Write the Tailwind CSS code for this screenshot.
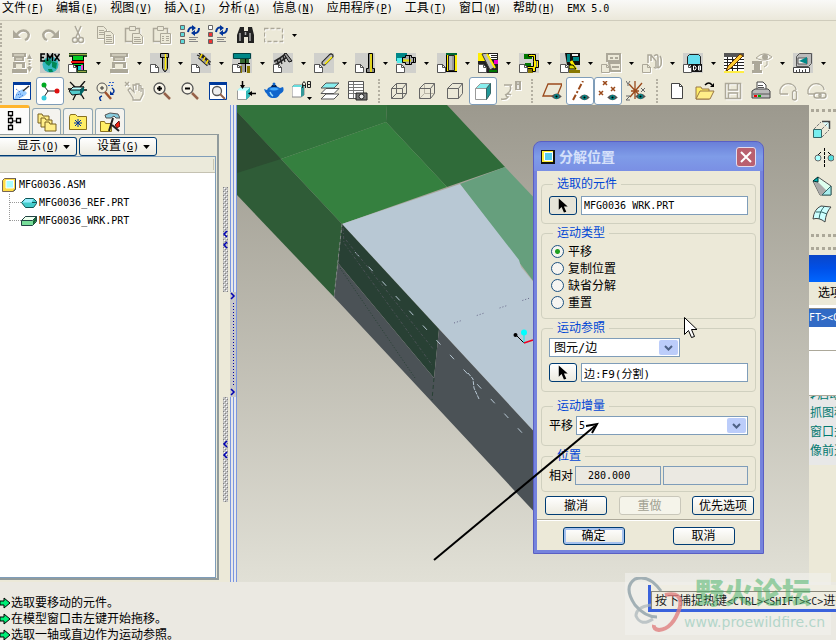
<!DOCTYPE html>
<html lang="zh-CN">
<head>
    <meta charset="UTF-8">
    <meta name="viewport" content="width=device-width, initial-scale=1.0">
    <title>MFG0036 - 分解位置</title>
    <script src="https://cdn.jsdelivr.net/npm/@tailwindcss/browser@4"></script>
</head>
<body class="relative flex h-screen flex-col overflow-hidden bg-[#ece9d8] font-['DejaVu_Sans_Mono','Noto_Sans_CJK_SC',monospace] text-[12px] leading-4 text-black">

    <!-- Icon sprite -->
    <svg class="hidden" aria-hidden="true">
        <symbol id="caret" viewBox="0 0 5 3"><path d="M0 0h5L2.5 3z"/></symbol>
        <symbol id="doc" viewBox="0 0 20 20"><path d="M.5 11.5h5l3 3v5h-8z" fill="#fff" stroke="#555"/><path d="M5.5 11v3.5H9" fill="none" stroke="#555"/></symbol>
        <symbol id="docg" viewBox="0 0 20 20"><path d="M.5 11.5h5l3 3v5h-8z" fill="#ece9d8" stroke="#aca899"/><path d="M5.5 11v3.5H9" fill="none" stroke="#aca899"/></symbol>
        <symbol id="eye" viewBox="0 0 12 8"><path d="M0 4Q6-3 12 4Q6 10 0 4z" fill="#555"/><circle cx="6" cy="4" r="2.8" fill="#088"/><circle cx="6" cy="4" r="1.2"/></symbol>

        <symbol id="undo" viewBox="0 0 20 20"><path d="M4 11Q8 4 14 6Q19 9 15 14l-2 1" fill="none" stroke="#aca899" stroke-width="2.5"/><path d="M1 5v8h8z" fill="#aca899"/></symbol>
        <symbol id="redo" viewBox="0 0 20 20"><path d="M16 11Q12 4 6 6Q1 9 5 14l2 1" fill="none" stroke="#aca899" stroke-width="2.5"/><path d="M19 5v8h-8z" fill="#aca899"/></symbol>
        <symbol id="cut" viewBox="0 0 20 20"><g fill="none" stroke="#aca899" stroke-width="1.5"><path d="M7 1l5 11M13 1L8 12"/><circle cx="7" cy="15" r="2.5"/><circle cx="13" cy="15" r="2.5"/></g></symbol>
        <symbol id="copy" viewBox="0 0 20 20"><g fill="#ece9d8" stroke="#aca899"><path d="M1.500 1.500h6l3 3v9h-9z"/><path d="M3 5.500h5M3 7.500h5M3 9.500h5"/><path d="M8.500 6.500h6l3 3v9h-9z"/><path d="M10 10.500h5M10 12.500h6M10 14.500h6M10 16.500h6"/></g></symbol>
        <symbol id="paste" viewBox="0 0 20 20"><g fill="#ece9d8" stroke="#aca899"><path d="M1.500 3.500h14v13h-14z" stroke-width="1.500"/><path d="M5.500 1.500h6v4h-6z"/><path d="M8.500 8.500h7l3 3v7h-10z"/><path d="M10 12.500h6M10 14.500h7M10 16.500h7"/></g></symbol>
        <symbol id="pastes" viewBox="0 0 20 20"><g fill="#ece9d8" stroke="#aca899"><path d="M1.500 3.500h14v13h-14z" stroke-width="1.500"/><path d="M5.500 1.500h6v4h-6z"/><path d="M8.500 8.500h10v10h-10z"/><path d="M10 11.500h2M14 11.500h3M10 13.500h2M14 13.500h3M10 15.500h2M14 15.500h3"/></g></symbol>
        <symbol id="regen" viewBox="0 0 20 20"><g fill="#5fd8d8" stroke="#666"><path d="M.5.500h4v4h-4zM.5 7.500h4v4h-4zM.5 14.500h4v4h-4z"/></g><path d="M8 7Q9 1 14 3M19 3q0 6-6 5" fill="none" stroke="#003399" stroke-width="2"/><path d="M12 0l4 3-4 3zM15 5l-4 3 4 3z" fill="#039"/><path d="M9 12.500h9M9 14.500h7M9 16.500h9" stroke="#888"/></symbol>
        <symbol id="regen2" viewBox="0 0 20 20"><g stroke="#666"><path d="M.5.500h4v4h-4z" fill="#fff"/><path d="M.5 7.500h4v4h-4zM.5 14.500h4v4h-4z" fill="#e33"/></g><path d="M8 7Q9 1 14 3M19 3q0 6-6 5" fill="none" stroke="#003399" stroke-width="2"/><path d="M12 0l4 3-4 3zM15 5l-4 3 4 3z" fill="#039"/><path d="M9 12.500h9M9 14.500h7M9 16.500h9" stroke="#888"/></symbol>
        <symbol id="find" viewBox="0 0 20 20"><path d="M4 2h4v4h4V2h4l2 8v8h-6v-6H8v6H1v-8z" fill="#222"/><path d="M4 8v8M14 8v8M9.500 7v3" stroke="#aaa" stroke-width="1.500"/></symbol>
        <symbol id="marquee" viewBox="0 0 20 20"><path d="M.5 3.500h18v13H.5z" fill="none" stroke="#aca899" stroke-width="1.300" stroke-dasharray="4 2"/></symbol>

        <symbol id="moldg" viewBox="0 0 20 20"><path d="M1 0h18v4H1zM4 4h12v4H4zM1 16h18v4H1zM3 9h14v6H3z" fill="#aca899"/><path d="M3 2h14M6 6h8" stroke="#ece9d8"/><path d="M6 11h8v5H6z" fill="#ece9d8"/></symbol>
        <symbol id="moldarrow" viewBox="0 0 20 20"><path d="M0 0h14v4H0zM2 4h10v4H2zM0 16h15v4H0zM1 9h12v6H1z" fill="#aca899"/><path d="M2 2h10M4 6h6" stroke="#ece9d8"/><path d="M4 11h6v5H4z" fill="#ece9d8"/><path d="M17.500 4v12" stroke="#aca899" stroke-width="2" stroke-dasharray="2 1"/><path d="M15 6l2.500-5L20 6zM15 14l2.500 5L20 14z" fill="#aca899"/></symbol>
        <symbol id="emx" viewBox="0 0 20 20"><path d="M0 0h20v20H0z" fill="#c8ccc8"/><circle cx="10.500" cy="11.500" r="8" fill="#38b8c0"/><path d="M4 7l6-1 2 3-3 4-3-2zM12 8l5 2-1 6-4-2zM8 16l4 0 1 3H9z" fill="#085"/><g stroke="#000" stroke-width="1.500" fill="none"><path d="M5 1H1v7h4M1 4.500h3M7.500 8V1l2.500 4L12.500 1v7M14.500 1l5 7M19.500 1l-5 7"/></g></symbol>
        <symbol id="mold" viewBox="0 0 20 20"><path d="M1 0h18v4H1zM4 17h15v3H4z" fill="#242"/><path d="M4 3h12v14H4z" fill="#000"/><path d="M5 3h10v4H5z" fill="#0c2"/><path d="M3 8h13v2H3z" fill="#e11"/><path d="M5 11h10v1H5z" fill="#0c2"/><path d="M10 13h3v4h-3z" fill="#0cc"/><path d="M13 12h2v5h-2z" fill="#e4c"/><path d="M1 1.500h18M10 18.500h8" stroke="#9a4"/><use href="#doc"/></symbol>
        <symbol id="screw" viewBox="0 0 20 20"><path d="M0 0h20v20H0z" fill="#d0d0cc"/><path d="M10.500.500h8v4h-8zM12.500 4.500h5v11l-2 3h-1l-2-3z" fill="#999" stroke="#000"/><path d="M15.500 1v16" stroke="#fe0" stroke-width="1.500"/><use href="#doc"/></symbol>
        <symbol id="spring" viewBox="0 0 20 20"><path d="M0 0h20v20H0z" fill="#d0d0cc"/><path d="M9 3l9 8" stroke="#222" stroke-width="6"/><path d="M9 3l9 8" stroke="#999" stroke-width="4"/><path d="M6 2l7 3M8 0l7 7M12 2l5 7M15 5l4 7" stroke="#222" stroke-width="1.300"/><path d="M9 5l2-4M12 8l2-4M15 11l2-4" stroke="#fd0" stroke-width="1.500"/><use href="#doc"/></symbol>
        <symbol id="plate" viewBox="0 0 20 20"><path d="M0 0h20v20H0z" fill="#d0d0cc"/><path d="M1.500.500h17v5h-17z" fill="#088" stroke="#044"/><path d="M8 6h9v4H8z" fill="#363"/><path d="M9 10h5v9H9z" fill="#999"/><path d="M6 10.500h12M13.500 6v13" stroke="#000"/><path d="M8 13h2v7H8zM15 13h3v7h-3z" fill="#870"/><use href="#doc"/></symbol>
        <symbol id="bolt" viewBox="0 0 20 20"><path d="M0 0h20v20H0z" fill="#d0d0cc"/><path d="M2 10l5-3 7-5" stroke="#222" stroke-width="5"/><path d="M2 10l5-3 7-5" stroke="#999" stroke-width="2"/><path d="M4 7l2 5M7 5l2 6M10 3l2 6" stroke="#222" stroke-width="1.300"/><path d="M11 1l2-1 6 8-3 1z" fill="#999" stroke="#111"/><use href="#doc"/></symbol>
        <symbol id="pin" viewBox="0 0 20 20"><path d="M0 0h20v20H0z" fill="#d0d0cc"/><path d="M10 10l7-7" stroke="#222" stroke-width="5" stroke-linecap="round"/><path d="M10 10l7-7" stroke="#bbb" stroke-width="3" stroke-linecap="round"/><path d="M11 11l7-7" stroke="#fe0" stroke-width="1.500"/><use href="#doc"/></symbol>
        <symbol id="sleeve" viewBox="0 0 20 20"><path d="M0 0h20v20H0z" fill="#d0d0cc"/><path d="M13.500.500h4v15h2v4h-8v-4h2z" fill="#888" stroke="#000"/><path d="M16 1v18" stroke="#fe0" stroke-width="1.500"/><use href="#doc"/></symbol>
        <symbol id="nozzle" viewBox="0 0 20 20"><path d="M0 0h20v20H0z" fill="#d0d0cc"/><path d="M0 0h11v8H0z" fill="#088"/><path d="M1 5h6v5H1z" fill="#5ee"/><path d="M6.500 4.500h3v-2h6v2h4v5h-4v2h-6v-2h-3z" fill="#aaa" stroke="#000"/><path d="M7 7.500h8" stroke="#dd0" stroke-width="2"/><path d="M13.500 3v8M17.500 5v4" stroke="#000"/><use href="#doc"/></symbol>
        <symbol id="tube" viewBox="0 0 20 20"><path d="M0 0h20v20H0z" fill="#d0d0cc"/><path d="M9 1h11v17H9z" fill="#fe0"/><path d="M9 0h11v2H9z" fill="#063"/><path d="M11.500 2.500h6v15h-6z" fill="#bbb" stroke="#222"/><path d="M16 3v14" stroke="#777"/><path d="M9 18.500h11M9.500 2v16" stroke="#000"/><use href="#doc"/></symbol>
        <symbol id="slider" viewBox="0 0 20 20"><path d="M0 0h20v20H0z" fill="#222"/><path d="M0 0h7v8H0z" fill="#fe0"/><path d="M11 1h8v5h-8z" fill="#fff"/><path d="M13 2.500h7M13 4.500h7" stroke="#222"/><path d="M16 7h4v4h-4z" fill="#e0c"/><path d="M4 1l5-1 8 14-5 3z" fill="#bbb" stroke="#333"/><path d="M9 1l8 14" stroke="#fe0" stroke-width="2"/><path d="M11 17h8v2h-8z" fill="#070"/><use href="#doc"/></symbol>
        <symbol id="clamp" viewBox="0 0 20 20"><path d="M0 0h20v20H0z" fill="#d0d0cc"/><path d="M5 1h8v5H5zM6 10h6v5H6z" fill="#070"/><path d="M9 16h5v4H9z" fill="#870"/><path d="M12.500 1.500h4v6h3v7h-3v4h-3v-3h-5v-2h6v-5h0v-5h-5v-2z" fill="#fe0" stroke="#000"/><path d="M17.500 8v6" stroke="#777"/><use href="#doc"/></symbol>
        <symbol id="lifter" viewBox="0 0 20 20"><path d="M0 0h20v20H0z" fill="#d0d0cc"/><path d="M5 0h15v12H7z" fill="#111"/><path d="M7 1h3v8H7zM13 4h6v4h-6z" fill="#088"/><path d="M12 1h6v2h-6z" fill="#eee"/><path d="M11 8l5 9" stroke="#fe0" stroke-width="3"/><path d="M9 12h4l3 4H9z" fill="#dd0" stroke="#000"/><path d="M9 17h11v3H9z" fill="#870"/><use href="#doc"/></symbol>
        <symbol id="blockg" viewBox="0 0 20 20"><path d="M6 1h13v7H6zM8 10h12v8H10z" fill="#ece9d8" stroke="#aca899" stroke-width="2"/><path d="M9 4h3v2H9zM14 4h3v2h-3zM11 13h7v2h-7z" fill="#aca899"/><use href="#docg"/></symbol>
        <symbol id="pairg" viewBox="0 0 20 20"><path d="M6 10V2h3v6M9 2l5 6v6M12 3q4-3 4 1v10q-3 2-4 0M18 3q2 3 1 9q-2 4-4 2" fill="none" stroke="#aca899" stroke-width="1.500"/><use href="#docg"/></symbol>
        <symbol id="db" viewBox="0 0 20 20"><path d="M0 0h20v20H0z" fill="#d0d0cc"/><path d="M4.500 3.500l2-2h9l2 2v8h-13z" fill="#6de" stroke="#222"/><path d="M8 11h11v8H8z" fill="#111"/><path d="M10.500 13v4h1.500l1-1v-2l-1-1zM15.500 13v4h2v-4zM15 15h3" fill="none" stroke="#fff"/><use href="#doc"/></symbol>
        <symbol id="bom" viewBox="0 0 20 20"><path d="M0 0h20v19H0z" fill="#fff"/><path d="M0 0h20v4H0z" fill="#555"/><path d="M0 6.500h20M0 9.500h20M0 12.500h20M0 15.500h20M3.500 4v15M8.500 4v15M13.500 4v15" stroke="#222"/><path d="M2 18l2-5L16 1l3 2L7 15z" fill="#fc3" stroke="#630"/><path d="M0 19h20" stroke="#fe4" stroke-width="2"/></symbol>
        <symbol id="viewg" viewBox="0 0 20 20"><path d="M0 8h10v3H8v6h2v3H0v-3h2v-6H0z" fill="#aca899"/><path d="M4 5Q12-3 20 4Q14 9 6 6z" fill="none" stroke="#aca899"/><circle cx="13" cy="4" r="3" fill="#aca899"/><path d="M15 8v4l-3 2" fill="none" stroke="#aca899"/></symbol>
        <symbol id="measure" viewBox="0 0 20 20"><path d="M0 0h20v20H0z" fill="#d0d0cc"/><path d="M3.500 3.500l3-3h12v10l-3 3h-12z" fill="#bbb" stroke="#555"/><path d="M5 5h9v6H5z" fill="#eee" stroke="#555"/><path d="M6 8l8-4v7z" fill="#088"/><path d="M.5 14.500h16v5H.5z" fill="#fff" stroke="#444"/><path d="M3.500 17v2M6.500 16v3M9.500 17v2M12.500 16v3" stroke="#444"/></symbol>

        <symbol id="repaint" viewBox="0 0 20 20"><path d="M1.500 1.500h17v17h-17z" fill="#fff" stroke="#003a9c"/><path d="M1 1h18v3H1z" fill="#003a9c"/><path d="M5 11l6-3 4 4q-2 4-10 6H2z" fill="#9cf"/><path d="M11 10l6-5" stroke="#333" stroke-width="1.500"/><path d="M4 8l4 3M4 14l5-1M7 17l4-3" stroke="#36c" stroke-dasharray="1 1"/></symbol>
        <symbol id="spin" viewBox="0 0 20 20"><path d="M4 5l4 5-4 6M8 10h8" fill="none" stroke="#222"/><circle cx="4" cy="4" r="2.500" fill="#0a2"/><circle cx="4" cy="17" r="2.500" fill="#3cd"/><circle cx="17" cy="10" r="2.500" fill="#d11"/></symbol>
        <symbol id="orient" viewBox="0 0 20 20"><path d="M2 1l5 5M17 0l-5 6M0 8h3M15 9h4M8 13l-3 6M13 13l3 5" stroke="#111" stroke-width="1.300"/><path d="M1 10l4-4h11l-3 7-9 1z" fill="#5cc" stroke="#111"/><path d="M2 9l3-3h11l-4 3z" fill="#bff" stroke="#111"/><path d="M12 9l4-3v4l-4 5z" fill="#066"/></symbol>
        <symbol id="spincenter" viewBox="0 0 20 20"><circle cx="6" cy="7" r="5" fill="#f4f0dc" stroke="#555"/><path d="M9 11l6 7" stroke="#a0522d" stroke-width="2.500"/><path d="M6 5v4M4 7h4" stroke="#333"/><path d="M13 1.500h5M12 4.500h5" stroke="#36c" stroke-dasharray="2 1"/><path d="M16 7q4 3 0 6M6 15q-4 1-1 5" fill="none" stroke="#039" stroke-width="1.500"/><path d="M14 10l4 4h-4z" fill="#039"/></symbol>
        <symbol id="hand" viewBox="0 0 20 20"><path d="M1 1l4 4M5 1L1 5M4 9l5 8v2h7l3-6V8l-2-1v4-6l-2-1v6-7l-3 0v6-5H9l1 7-4-4z" fill="none" stroke="#aca899" stroke-width="1.300"/></symbol>
        <symbol id="zoomin" viewBox="0 0 20 20"><circle cx="7.500" cy="7.500" r="5.500" fill="#f8f4e8" stroke="#555" stroke-width="1.300"/><path d="M12 12l6 6" stroke="#96624a" stroke-width="2.500"/><path d="M5 7.500h5M7.500 5v5" stroke="#000" stroke-width="2"/></symbol>
        <symbol id="zoomout" viewBox="0 0 20 20"><circle cx="7.500" cy="7.500" r="5.500" fill="#f8f4e8" stroke="#555" stroke-width="1.300"/><path d="M12 12l6 6" stroke="#96624a" stroke-width="2.500"/><path d="M5 7.500h5" stroke="#000" stroke-width="2"/></symbol>
        <symbol id="refit" viewBox="0 0 20 20"><path d="M1.500 1.500h17v17h-17z" fill="#fff" stroke="#003a9c"/><path d="M1 1h18v3H1z" fill="#003a9c"/><circle cx="9" cy="10" r="4.500" fill="#eee" stroke="#555" stroke-width="1.300"/><path d="M12 13l5 5" stroke="#96624a" stroke-width="2"/></symbol>
        <symbol id="reorient" viewBox="0 0 20 20"><path d="M1.500 9.500l3-3h9v9l-3 3h-9z" fill="#fff" stroke="#999"/><path d="M10 10l4-4v9l-4 4z" fill="#3bb"/><path d="M1 9.500l3-3h10l-3 3z" fill="#bff"/><path d="M6.500 0v6M20 12.500h-5" stroke="#000" stroke-width="1.500"/><path d="M4 4h5L6.500 8zM16 10v5l-4-2.500z"/></symbol>
        <symbol id="teapot" viewBox="0 0 20 20"><path d="M4 7Q10 3 16 7l3-1q2 5-3 7-2 4-5 4H8q-4-1-5-4-2-1-3-5l3 1z" fill="#16c"/><path d="M8 4h4l1 2H7z" fill="#025"/><path d="M5 8q5-3 10 0-5 3-10 0z" fill="#4af"/><path d="M6 11q1 3 3 4" stroke="#9df" fill="none" stroke-width="1.500"/><circle cx="10" cy="3" r="1.500" fill="#16c"/></symbol>
        <symbol id="saved" viewBox="0 0 20 20"><path d="M0 6l2-2h10v10l-3 2H0z" fill="#fff" stroke="#888"/><path d="M0 6l2-2h10L9 6z" fill="#6dd"/><path d="M9 6l3-2v10l-3 2z" fill="#399"/><path d="M10.500 7V2.500l1.500-2 1.500 2V7M10.500 4.500h3M15.500.500v6h3v-6zM15.500 3.500h3" fill="none" stroke="#222"/><path d="M15 16h5l-2.500 3z"/></symbol>
        <symbol id="layers" viewBox="0 0 20 20"><g stroke="#555"><path d="M1 18l5-5h13l-5 5z" fill="#fff"/><path d="M1 12.500l5-5h13l-5 5z" fill="#fff"/><path d="M1 7l5-5h13l-5 5z" fill="#8ee"/></g></symbol>
        <symbol id="viewmgr" viewBox="0 0 20 20"><path d="M.5.500h15v17H.5z" fill="#fff" stroke="#555"/><path d="M1 3.500h14M1 6.500h14M1 9.500h14M1 12.500h8M5.500 1v16" stroke="#777"/><path d="M8 12h11v7H8z" fill="#777" stroke="#222"/><circle cx="13.500" cy="15.500" r="2.500" fill="#eee" stroke="#222"/></symbol>
        <symbol id="wire" viewBox="0 0 20 20"><path d="M2.500 7.500h11v10h-11zM7.500 2.500h10v10h-10zM2.500 7.500l5-5M13.500 7.500l4-5M13.500 17.500l4-5M2.500 17.500l5-5" fill="none" stroke="#666"/></symbol>
        <symbol id="hidline" viewBox="0 0 20 20"><path d="M7.500 2.500v10h10M2.500 17.500l5-5" fill="none" stroke="#b8b4a6"/><path d="M2.500 7.500h11v10h-11zM2.500 7.500l5-5h10v10l-4 5M13.500 7.500l4-5" fill="none" stroke="#666"/></symbol>
        <symbol id="nohid" viewBox="0 0 20 20"><path d="M2.500 7.500h11v10h-11zM2.500 7.500l5-5h10v10l-4 5M13.500 7.500l4-5" fill="none" stroke="#666"/></symbol>
        <symbol id="shade" viewBox="0 0 20 20"><path d="M2.500 7.500h11v11h-11z" fill="#fff" stroke="#999"/><path d="M2.500 7.500l5-5h10l-4 5z" fill="#8ee" stroke="#999"/><path d="M13.500 7.500l4-5v10l-4 6z" fill="#299" stroke="#366"/></symbol>
        <symbol id="note" viewBox="0 0 20 20"><path d="M3 4h8M9 5q2 4-2 7t0 4q-2 3-7 2M4 14q3-2 6 0" fill="none" stroke="#aca899" stroke-width="1.500"/><path d="M14 0h6v9h-6z" fill="#aca899"/><path d="M17 1.500v1M17 4v4" stroke="#fff" stroke-width="1.500"/></symbol>
        <symbol id="planes" viewBox="0 0 20 20"><path d="M1 15L6 3h14l-5 12z" fill="none" stroke="#9a4a1c" stroke-width="1.300"/><use href="#eye" x="9" y="12" width="11" height="7"/></symbol>
        <symbol id="axes" viewBox="0 0 20 20"><path d="M3 19L13 0" stroke="#9a4a1c" stroke-width="2" stroke-dasharray="6 2 2 2"/><use href="#eye" x="9" y="13" width="11" height="7"/></symbol>
        <symbol id="points" viewBox="0 0 20 20"><path d="M5 0l4 4M9 0L5 4M13 6l4 4M17 6l-4 4M1 10l4 4M5 10l-4 4" stroke="#9a4a1c" stroke-width="1.500"/><use href="#eye" x="9" y="13" width="11" height="7"/></symbol>
        <symbol id="csys" viewBox="0 0 20 20"><path d="M9 0v18M3 3l12 13M16 2L4 16M5 10h8" stroke="#9a4a1c" stroke-width="1.300"/><path d="M0 0l2 3 2-3M2 3v2M15 7l4 4M19 7l-4 4M0 15h4l-4 4h4" fill="none" stroke="#666"/><use href="#eye" x="9" y="12" width="11" height="7"/></symbol>
        <symbol id="new" viewBox="0 0 20 20"><path d="M4.500 2.500h8l3 3v12h-11z" fill="#fff" stroke="#444"/><path d="M12.500 2.500v3h3" fill="none" stroke="#444"/></symbol>
        <symbol id="open" viewBox="0 0 20 20"><path d="M1 6h5l1 2h7v10H1z" fill="#fe6" stroke="#974"/><path d="M1 18l4-8h14l-4 8z" fill="#fe8" stroke="#974"/><path d="M10 4q4-4 7 0" fill="none" stroke="#000" stroke-width="1.500"/><path d="M19 2v4h-4z"/></symbol>
        <symbol id="save" viewBox="0 0 20 20"><path d="M2.500 2.500h15v15h-15z" fill="none" stroke="#aca899" stroke-width="1.500"/><path d="M5.500 3v6h9V3M5.500 17v-5h9v5" fill="none" stroke="#aca899" stroke-width="1.500"/></symbol>
        <symbol id="print" viewBox="0 0 20 20"><path d="M6 9V1h6l3 3v5" fill="#fff" stroke="#444"/><path d="M7 4.500h5M7 6.500h6" stroke="#555"/><path d="M1 10l3-2h13l2 2v7H1z" fill="#bbb" stroke="#444"/><path d="M2 13h17" stroke="#555"/><path d="M3 14h3v2H3z" fill="#e00"/><path d="M7 14h3v2H7z" fill="#0a0"/></symbol>
        <symbol id="clip" viewBox="0 0 20 20"><path d="M1 13V9Q4 1 12 3q5 2 5 6M1 13h8" fill="none" stroke="#aca899" stroke-width="1.300"/><path d="M13.500 18v-7q2-3 4 0v7q-2 2-4 0v-4" fill="none" stroke="#aca899" stroke-width="1.300"/></symbol>
        <symbol id="link" viewBox="0 0 20 20"><path d="M1 13V9Q4 1 12 3q5 2 5 6M1 13h6" fill="none" stroke="#aca899" stroke-width="1.300"/><rect x="7" y="12" width="7" height="5" rx="2.500" fill="none" stroke="#aca899" stroke-width="1.500"/><rect x="12" y="12" width="7" height="5" rx="2.500" fill="none" stroke="#aca899" stroke-width="1.500"/></symbol>

        <symbol id="treetab" viewBox="0 0 20 20"><path d="M6 3v14M6 10h8" fill="none" stroke="#000"/><path d="M3.500.500h4v4h-4zM3.500 7.500h4v4h-4zM3.500 14.500h4v4h-4zM11.500 7.500h4v4h-4z" fill="#fff" stroke="#000" stroke-width="1.300"/></symbol>
        <symbol id="folders" viewBox="0 0 20 20"><g fill="#fe8" stroke="#786020"><path d="M1 2h4l1 2h6v7H1z"/><path d="M4 6h4l1 2h6v7H4z"/><path d="M8 10h4l1 2h6v7H8z"/></g></symbol>
        <symbol id="favorite" viewBox="0 0 20 20"><path d="M1.500 4.500l1-2h5l2 2h9v13h-17z" fill="#fe6" stroke="#887020"/><path d="M10 7v8M6 11h8M7 8l6 6M13 8l-6 6" stroke="#0033a0"/></symbol>
        <symbol id="connect" viewBox="0 0 20 20"><path d="M.5 9.500h4l1 2h6v8H.5z" fill="#fe6" stroke="#887020"/><path d="M5 3l5-2 8 1 2 4h-4l-2-2-3 2H6z" fill="#8cd" stroke="#555"/><path d="M13 6L9 19M12 13l7 6" stroke="#222" stroke-width="2"/><path d="M15 13l4-4 1 5-3 2z" fill="#e21" stroke="#611"/></symbol>
        <symbol id="asm" viewBox="0 0 14 14"><path d="M.5 2.500l2-2h11v11l-2 2H.5z" fill="#fd4" stroke="#765"/><path d="M4 2.500h7.500V10H4z" fill="#aff" stroke="#fff"/><path d="M11.500 13l2-2V.500" fill="none" stroke="#345"/></symbol>
        <symbol id="explode" viewBox="0 0 14 14"><path d="M0 0h14v14H0z" fill="#111"/><path d="M1 1h11v11H1z" fill="#fe3"/><path d="M3.500 2.500h8v8h-8z" fill="#5ce" stroke="#fff"/></symbol>
        <symbol id="ref" viewBox="0 0 16 12"><path d="M.5 5.500l4-4h8l3 3v2l-3 4h-8z" fill="#4cc" stroke="#155"/><path d="M1.500 5.500l3-3.500h8l-2 3.500z" fill="#9ef"/><path d="M11 5.500h4" stroke="#155"/></symbol>
        <symbol id="wrk" viewBox="0 0 16 12"><path d="M.5 5.500l4-4h11v5l-4 4H.5z" fill="#7d9" stroke="#244"/><path d="M.5 5.500l4-4h11l-4 4z" fill="#efe" stroke="#244"/><path d="M12 6l3-4v4l-3 4z" fill="#163"/></symbol>
        <symbol id="pointer" viewBox="0 0 12 17"><path d="M1.500.500v12l3-3 2.500 6 2.500-1-2.500-5.500h4z"/></symbol>
        <symbol id="chevron" viewBox="0 0 9 6"><path d="M1 1l3.500 3.500L8 1" fill="none" stroke="#4d6185" stroke-width="2"/></symbol>
        <symbol id="goarrow" viewBox="0 0 11 12"><path d="M0 4h4V1l6 5-6 5V8H0z" fill="#0e7" stroke="#000"/></symbol>

        <symbol id="extrude" viewBox="0 0 20 20"><path d="M1.500 9.500h8v8h-8z" fill="#7ee" stroke="#366"/><path d="M10 1.500h7.500V9" fill="#dff" stroke="#444" stroke-width="1.500"/><path d="M2 9l7-7M10 9l7-7M10 17l7-7" stroke="#777" stroke-dasharray="3 1"/></symbol>
        <symbol id="mirror" viewBox="0 0 20 20"><path d="M10.500 0v20" stroke="#000" stroke-dasharray="3 1"/><path d="M4 7l3-3M17 7l-3-3" stroke="#000"/><circle cx="4" cy="10" r="3" fill="#aff" stroke="#666"/><circle cx="17" cy="10" r="3" fill="#5dd" stroke="#666"/></symbol>
        <symbol id="draft" viewBox="0 0 20 20"><path d="M1 5l5-4 13 9v9H8z" fill="#dfe" stroke="#555"/><path d="M6 6l13 13H8L2 6z" fill="#aaa"/><path d="M10 19l9-9v9z" fill="#aee" stroke="#366"/><path d="M1 5l5-4v5z" fill="#0bb" stroke="#033"/></symbol>
        <symbol id="surface" viewBox="0 0 20 20"><path d="M1 15Q2 5 9 2l10 1q-5 5-6 15-6-5-12-3z" fill="#cff" stroke="#444"/><path d="M4 8q6-1 11 2M13 2Q8 6 7 15" fill="none" stroke="#366"/></symbol>
    </svg>

    <header>
        <nav class="flex h-[21px] gap-3 border-b border-[#cfccbc] bg-gradient-to-b from-[#f9f9f7] to-[#ebe8da] pl-0.5 leading-[17px] whitespace-nowrap">
            <a href="#">文件<span class="text-[10px]">(<u>F</u>)</span></a>
            <a href="#">编辑<span class="text-[10px]">(<u>E</u>)</span></a>
            <a href="#">视图<span class="text-[10px]">(<u>V</u>)</span></a>
            <a href="#">插入<span class="text-[10px]">(<u>I</u>)</span></a>
            <a href="#">分析<span class="text-[10px]">(<u>A</u>)</span></a>
            <a href="#">信息<span class="text-[10px]">(<u>N</u>)</span></a>
            <a href="#">应用程序<span class="text-[10px]">(<u>P</u>)</span></a>
            <a href="#">工具<span class="text-[10px]">(<u>T</u>)</span></a>
            <a href="#">窗口<span class="text-[10px]">(<u>W</u>)</span></a>
            <a href="#">帮助<span class="text-[10px]">(<u>H</u>)</span></a>
            <a href="#"><span class="text-[10px]">EMX 5.0</span></a>
        </nav>

        <div role="toolbar" aria-label="编辑" class="flex h-7 items-center">
            <span class="mr-1.5 h-6 w-0.5 border-l-2 border-dotted border-[#b4b0a2]"></span>
            <button aria-label="撤消" class="flex w-7 justify-center"><svg class="size-5 drop-shadow-[1px_1px_0_#fff]"><use href="#undo"/></svg></button>
            <button aria-label="重做" class="flex w-7 justify-center"><svg class="size-5 drop-shadow-[1px_1px_0_#fff]"><use href="#redo"/></svg></button>
            <button aria-label="剪切" class="flex w-7 justify-center"><svg class="size-5 drop-shadow-[1px_1px_0_#fff]"><use href="#cut"/></svg></button>
            <button aria-label="复制" class="flex w-7 justify-center"><svg class="size-5 drop-shadow-[1px_1px_0_#fff]"><use href="#copy"/></svg></button>
            <button aria-label="粘贴" class="flex w-7 justify-center"><svg class="size-5 drop-shadow-[1px_1px_0_#fff]"><use href="#paste"/></svg></button>
            <button aria-label="选择性粘贴" class="flex w-7 justify-center"><svg class="size-5 drop-shadow-[1px_1px_0_#fff]"><use href="#pastes"/></svg></button>
            <button aria-label="再生" class="flex w-7 justify-center"><svg class="size-5"><use href="#regen"/></svg></button>
            <button aria-label="再生管理器" class="flex w-7 justify-center"><svg class="size-5"><use href="#regen2"/></svg></button>
            <button aria-label="查找" class="flex w-7 justify-center"><svg class="size-5"><use href="#find"/></svg></button>
            <button aria-label="选取框" class="flex w-7 justify-center"><svg class="size-5 drop-shadow-[1px_1px_0_#fff]"><use href="#marquee"/></svg></button>
            <button aria-label="更多选取" class="flex w-3 justify-center"><svg class="h-[3px] w-[5px]"><use href="#caret"/></svg></button>
        </div>

        <div role="toolbar" aria-label="EMX" class="flex h-7 items-center">
            <span class="mr-1.5 h-6 w-0.5 border-l-2 border-dotted border-[#b4b0a2]"></span>
            <button aria-label="模架" class="flex w-7 justify-center"><svg class="size-5 drop-shadow-[1px_1px_0_#fff]"><use href="#moldarrow"/></svg></button>
            <button aria-label="EMX" class="flex w-7 justify-center"><svg class="size-5"><use href="#emx"/></svg></button>
            <button aria-label="组件" class="flex w-7 justify-center"><svg class="size-5"><use href="#mold"/></svg></button>
            <button aria-label="组件菜单" class="flex w-[13px] justify-center"><svg class="h-[3px] w-[5px]"><use href="#caret"/></svg></button>
            <button aria-label="模板" class="flex w-7 justify-center"><svg class="size-5 drop-shadow-[1px_1px_0_#fff]"><use href="#moldg"/></svg></button>
            <button aria-label="模板菜单" class="flex w-[13px] justify-center"><svg class="h-[3px] w-[5px]"><use href="#caret"/></svg></button>
            <button aria-label="螺钉" class="flex w-7 justify-center"><svg class="size-5"><use href="#screw"/></svg></button>
            <button aria-label="螺钉菜单" class="flex w-[13px] justify-center"><svg class="h-[3px] w-[5px]"><use href="#caret"/></svg></button>
            <button aria-label="弹簧" class="flex w-7 justify-center"><svg class="size-5"><use href="#spring"/></svg></button>
            <button aria-label="弹簧菜单" class="flex w-[13px] justify-center"><svg class="h-[3px] w-[5px]"><use href="#caret"/></svg></button>
            <button aria-label="定位环" class="flex w-7 justify-center"><svg class="size-5"><use href="#plate"/></svg></button>
            <button aria-label="定位环菜单" class="flex w-[13px] justify-center"><svg class="h-[3px] w-[5px]"><use href="#caret"/></svg></button>
            <button aria-label="螺栓" class="flex w-7 justify-center"><svg class="size-5"><use href="#bolt"/></svg></button>
            <button aria-label="螺栓菜单" class="flex w-[13px] justify-center"><svg class="h-[3px] w-[5px]"><use href="#caret"/></svg></button>
            <button aria-label="销钉" class="flex w-7 justify-center"><svg class="size-5"><use href="#pin"/></svg></button>
            <button aria-label="销钉菜单" class="flex w-[13px] justify-center"><svg class="h-[3px] w-[5px]"><use href="#caret"/></svg></button>
            <button aria-label="顶杆" class="flex w-7 justify-center"><svg class="size-5"><use href="#sleeve"/></svg></button>
            <button aria-label="顶杆菜单" class="flex w-[13px] justify-center"><svg class="h-[3px] w-[5px]"><use href="#caret"/></svg></button>
            <button aria-label="冷却" class="flex w-7 justify-center"><svg class="size-5"><use href="#nozzle"/></svg></button>
            <button aria-label="冷却菜单" class="flex w-[13px] justify-center"><svg class="h-[3px] w-[5px]"><use href="#caret"/></svg></button>
            <button aria-label="导柱" class="flex w-7 justify-center"><svg class="size-5"><use href="#tube"/></svg></button>
            <button aria-label="导柱菜单" class="flex w-[13px] justify-center"><svg class="h-[3px] w-[5px]"><use href="#caret"/></svg></button>
            <button aria-label="滑块" class="flex w-7 justify-center"><svg class="size-5"><use href="#slider"/></svg></button>
            <button aria-label="滑块菜单" class="flex w-[13px] justify-center"><svg class="h-[3px] w-[5px]"><use href="#caret"/></svg></button>
            <button aria-label="锁模" class="flex w-7 justify-center"><svg class="size-5"><use href="#clamp"/></svg></button>
            <button aria-label="锁模菜单" class="flex w-[13px] justify-center"><svg class="h-[3px] w-[5px]"><use href="#caret"/></svg></button>
            <button aria-label="斜顶" class="flex w-7 justify-center"><svg class="size-5"><use href="#lifter"/></svg></button>
            <button aria-label="斜顶菜单" class="flex w-[13px] justify-center"><svg class="h-[3px] w-[5px]"><use href="#caret"/></svg></button>
            <button aria-label="热流道" class="flex w-7 justify-center"><svg class="size-5 drop-shadow-[1px_1px_0_#fff]"><use href="#blockg"/></svg></button>
            <button aria-label="热流道菜单" class="flex w-[13px] justify-center"><svg class="h-[3px] w-[5px]"><use href="#caret"/></svg></button>
            <button aria-label="元件" class="flex w-7 justify-center"><svg class="size-5 drop-shadow-[1px_1px_0_#fff]"><use href="#pairg"/></svg></button>
            <button aria-label="元件菜单" class="flex w-[13px] justify-center"><svg class="h-[3px] w-[5px]"><use href="#caret"/></svg></button>
            <button aria-label="元件库" class="flex w-7 justify-center"><svg class="size-5"><use href="#db"/></svg></button>
            <button aria-label="元件库菜单" class="flex w-[13px] justify-center"><svg class="h-[3px] w-[5px]"><use href="#caret"/></svg></button>
            <button aria-label="材料清单" class="flex w-7 justify-center"><svg class="size-5"><use href="#bom"/></svg></button>
            <button aria-label="显示" class="flex w-7 justify-center"><svg class="size-5 drop-shadow-[1px_1px_0_#fff]"><use href="#viewg"/></svg></button>
            <button aria-label="显示菜单" class="flex w-[13px] justify-center"><svg class="h-[3px] w-[5px]"><use href="#caret"/></svg></button>
            <button aria-label="测量" class="flex w-7 justify-center"><svg class="size-5"><use href="#measure"/></svg></button>
            <button aria-label="测量菜单" class="flex w-[13px] justify-center"><svg class="h-[3px] w-[5px]"><use href="#caret"/></svg></button>
        </div>

        <div role="toolbar" aria-label="视图" class="flex h-7 items-center">
            <span class="mr-1.5 h-6 w-0.5 border-l-2 border-dotted border-[#b4b0a2]"></span>
            <button aria-label="重画" class="flex w-7 justify-center"><svg class="size-5"><use href="#repaint"/></svg></button>
            <button aria-label="旋转中心" aria-pressed="true" class="flex size-7 items-center justify-center rounded-[3px] border border-[#7f9db9] bg-white"><svg class="size-5"><use href="#spin"/></svg></button>
            <button aria-label="定向模式" class="flex w-7 justify-center"><svg class="size-5"><use href="#orient"/></svg></button>
            <button aria-label="外观库" class="flex w-7 justify-center"><svg class="size-5"><use href="#spincenter"/></svg></button>
            <button aria-label="平移" class="flex w-7 justify-center"><svg class="size-5 drop-shadow-[1px_1px_0_#fff]"><use href="#hand"/></svg></button>
            <button aria-label="放大" class="flex w-7 justify-center"><svg class="size-5"><use href="#zoomin"/></svg></button>
            <button aria-label="缩小" class="flex w-7 justify-center"><svg class="size-5"><use href="#zoomout"/></svg></button>
            <button aria-label="重新调整" class="flex w-7 justify-center"><svg class="size-5"><use href="#refit"/></svg></button>
            <button aria-label="重定向" class="flex w-7 justify-center"><svg class="size-5"><use href="#reorient"/></svg></button>
            <button aria-label="渲染" class="flex w-7 justify-center"><svg class="size-5"><use href="#teapot"/></svg></button>
            <button aria-label="已命名视图" class="flex w-7 justify-center"><svg class="size-5"><use href="#saved"/></svg></button>
            <button aria-label="层" class="flex w-7 justify-center"><svg class="size-5"><use href="#layers"/></svg></button>
            <button aria-label="视图管理器" class="flex w-7 justify-center"><svg class="size-5"><use href="#viewmgr"/></svg></button>
            <span class="flex w-[13px] justify-center"><span class="h-6 border-l-2 border-dotted border-[#b4b0a2]"></span></span>
            <button aria-label="线框" class="flex w-7 justify-center"><svg class="size-5"><use href="#wire"/></svg></button>
            <button aria-label="隐藏线" class="flex w-7 justify-center"><svg class="size-5"><use href="#hidline"/></svg></button>
            <button aria-label="无隐藏线" class="flex w-7 justify-center"><svg class="size-5"><use href="#nohid"/></svg></button>
            <button aria-label="着色" aria-pressed="true" class="flex size-7 items-center justify-center rounded-[3px] border border-[#7f9db9] bg-white"><svg class="size-5"><use href="#shade"/></svg></button>
            <button aria-label="注释" class="flex w-7 justify-center"><svg class="size-5 drop-shadow-[1px_1px_0_#fff]"><use href="#note"/></svg></button>
            <span class="flex w-[13px] justify-center"><span class="h-6 border-l-2 border-dotted border-[#b4b0a2]"></span></span>
            <button aria-label="基准平面" class="flex w-7 justify-center"><svg class="size-5"><use href="#planes"/></svg></button>
            <button aria-label="基准轴" aria-pressed="true" class="flex size-7 items-center justify-center rounded-[3px] border border-[#7f9db9] bg-white"><svg class="size-5"><use href="#axes"/></svg></button>
            <button aria-label="基准点" aria-pressed="true" class="flex size-7 items-center justify-center rounded-[3px] border border-[#7f9db9] bg-white"><svg class="size-5"><use href="#points"/></svg></button>
            <button aria-label="坐标系" class="flex w-7 justify-center"><svg class="size-5"><use href="#csys"/></svg></button>
            <span class="flex w-[13px] justify-center"><span class="h-6 border-l-2 border-dotted border-[#b4b0a2]"></span></span>
            <button aria-label="新建" class="flex w-7 justify-center"><svg class="size-5"><use href="#new"/></svg></button>
            <button aria-label="打开" class="flex w-7 justify-center"><svg class="size-5"><use href="#open"/></svg></button>
            <button aria-label="保存" class="flex w-7 justify-center"><svg class="size-5 drop-shadow-[1px_1px_0_#fff]"><use href="#save"/></svg></button>
            <button aria-label="打印" class="flex w-7 justify-center"><svg class="size-5"><use href="#print"/></svg></button>
            <button aria-label="附件" class="flex w-7 justify-center"><svg class="size-5 drop-shadow-[1px_1px_0_#fff]"><use href="#clip"/></svg></button>
            <button aria-label="链接" class="flex w-7 justify-center"><svg class="size-5 drop-shadow-[1px_1px_0_#fff]"><use href="#link"/></svg></button>
        </div>
    </header>

    <main class="flex min-h-0 flex-1">
        <!-- Model tree -->
        <aside class="flex w-[219px] shrink-0 flex-col pb-0.5">
            <div class="flex h-[29px] items-end gap-0.5">
                <button aria-label="模型树" class="flex h-full w-[30px] items-center justify-center rounded-tr-[3px] border-t-[3px] border-r border-t-[#ffb52e] border-r-[#919b9c] bg-[#fcfcfb]"><svg class="size-5"><use href="#treetab"/></svg></button>
                <button aria-label="文件夹浏览器" class="flex h-[26px] w-[29px] items-center justify-center rounded-t-[3px] border border-b-0 border-[#91a7b4] bg-[#f4f3ee]"><svg class="size-5"><use href="#folders"/></svg></button>
                <button aria-label="收藏夹" class="flex h-[26px] w-[30px] items-center justify-center rounded-t-[3px] border border-b-0 border-[#91a7b4] bg-[#f4f3ee]"><svg class="size-5"><use href="#favorite"/></svg></button>
                <button aria-label="连接" class="flex h-[26px] w-[30px] items-center justify-center rounded-t-[3px] border border-b-0 border-[#91a7b4] bg-[#f4f3ee]"><svg class="size-5"><use href="#connect"/></svg></button>
            </div>
            <div class="flex min-h-0 flex-1 flex-col border-t border-r-2 border-b-2 border-[#919b9c] pt-0.5 pr-px">
                <div class="flex gap-0.5">
                    <button class="flex h-[19px] w-[77px] items-center justify-end gap-1 rounded-r-[3px] border border-l-0 border-[#003c74] bg-gradient-to-b from-white to-[#eceadf] pr-1.5"><span>显示<span class="text-[10px]">(<u>O</u>)</span></span><svg class="h-1 w-[7px]"><use href="#caret"/></svg></button>
                    <button class="flex h-[19px] w-[78px] items-center justify-end gap-1 rounded-[3px] border border-[#003c74] bg-gradient-to-b from-white to-[#eceadf] pr-1.5"><span>设置<span class="text-[10px]">(<u>G</u>)</span></span><svg class="h-1 w-[7px]"><use href="#caret"/></svg></button>
                </div>
                <div class="flex min-h-0 flex-1 flex-col border-t border-r border-b border-[#7f9db9] bg-white">
                    <div class="h-4 border-b border-[#c5c2b2] bg-[#ebeadb] py-0.5 pr-px"><div class="h-full border-r border-[#c7c5b2]"></div></div>
                    <ul class="pt-[3px] text-[10px] leading-[18px]">
                        <li>
                            <span class="flex items-center gap-[3px] pl-0.5"><svg class="size-3.5"><use href="#asm"/></svg>MFG0036.ASM</span>
                            <ul class="relative pl-[21px]">
                                <li class="absolute top-0 left-[9px] h-[27px] w-3 border-b border-l border-dotted border-[#999]" aria-hidden="true"></li>
                                <li class="absolute top-0 left-[9px] h-[9px] w-3 border-b border-dotted border-[#999]" aria-hidden="true"></li>
                                <li class="flex items-center gap-0.5"><svg class="h-3 w-4"><use href="#ref"/></svg>MFG0036_REF.PRT</li>
                                <li class="flex items-center gap-0.5"><svg class="h-3 w-4"><use href="#wrk"/></svg>MFG0036_WRK.PRT</li>
                            </ul>
                        </li>
                    </ul>
                </div>
            </div>
        </aside>

        <!-- Sash -->
        <svg class="h-full w-[18px] shrink-0" viewBox="219 105 18 477" preserveAspectRatio="xMinYMin slice" aria-hidden="true">
            <defs>
                <pattern id="grip" width="4" height="4" patternUnits="userSpaceOnUse"><path d="M0 0h4v4H0z" fill="#c0c0c0"/><path d="M0 0h1v1H0zM2 2h1v1H2z" fill="#fff"/><path d="M1 1h1v1H1zM3 3h1v1H3z" fill="#808080"/></pattern>
            </defs>
            <path d="M230 105h7v600h-7z" fill="#e8e8ea"/>
            <path d="M230.500 105v600M233.500 105v600M236.500 105v600" stroke="#7a96df"/>
            <path d="M223 187h5v105h-5zM223 397h5v105h-5z" fill="url(#grip)"/>
            <path d="M230 292h6v105h-6z" fill="#c8c8c8"/>
            <path d="M233.500 303v83" stroke="#0000a8" stroke-dasharray="1 2"/>
            <path d="M227 231l-3 3 3 3M227 242l-3 3 3 3M227 441l-3 3 3 3M227 452l-3 3 3 3M231 293l3 3-3 3M231 389l3 3-3 3" fill="none" stroke="#0000b4" stroke-width="1.500"/>
        </svg>

        <!-- Graphics window -->
        <section class="relative min-w-0 flex-1">
            <svg class="absolute inset-0 size-full bg-gradient-to-b from-[#9c998e] to-[#e1e0d6]" viewBox="237 105 572 477" preserveAspectRatio="xMinYMin slice" aria-hidden="true">
                <path d="M237 105h150l-1 17-105 37-44-47z" fill="#32733c"/>
                <path d="M387 105h60l58 62-58 20-61-65z" fill="#2f6b39"/>
                <path d="M281 159l105-37 61 65-105 37z" fill="#35803f"/>
                <path d="M237 112l105 112-8 73-97-102z" fill="#2f5c37"/>
                <path d="M237 112l44 47-44 14z" fill="#2c4d31"/>
                <path d="M460 184l45-17 35 37v86z" fill="#669f7d"/>
                <path d="M342 224l118-40 59 76 2 7 19 23v148z" fill="#b8c8d4"/>
                <path d="M342 224l97 105-5 49-96-115z" fill="#284034"/>
                <path d="M338 263l96 115 5-49 101 109v80L334 297z" fill="#4b5256"/>
                <path d="M355 252l170 184" stroke="#b8c8d4" stroke-dasharray="6 14" fill="none"/>
                <path d="M343 228l1 15 88 122M346 240l88 110" stroke="#4b5256" stroke-dasharray="3 2 1 2" fill="none"/>
                <path d="M340 268l75 110" stroke="#284034" stroke-dasharray="1 2"/>
                <path d="M342 224l-8 73" stroke="#7d8584" stroke-dasharray="3 3"/>
                <path d="M434 378l-2 22" stroke="#284034" stroke-dasharray="4 3"/>
                <path d="M468 373l5 6 1 9 5 11" fill="none" stroke="#b8c8d4" stroke-dasharray="4 1"/>
                <path d="M454 323l79-26" stroke="#668" stroke-dasharray="1 2 1 2 1 17"/>
                <path d="M516 335l8 8" stroke="#000"/><circle cx="515.500" cy="335" r="2"/>
                <path d="M524 343v-8" stroke="#0ee"/><circle cx="524" cy="332.500" r="3" fill="#0ff"/>
                <path d="M524 343l9-3" stroke="#e02" stroke-width="1.500"/>
            </svg>

            <!-- Explode position dialog -->
            <form class="absolute top-[37px] left-[297px] w-[229px] rounded-t-[7px] border-[3px] border-t-0 border-[#7583dd] bg-[#ece9d8] pb-[5px] outline outline-[#5a5fc4]">
                <div class="-mx-[3px] flex h-[29px] items-center rounded-t-[6px] bg-gradient-to-b from-[#6a7fd8] via-[#7f9ce8] to-[#7a8fe4] px-[7px]">
                    <svg class="size-3.5"><use href="#explode"/></svg>
                    <h2 class="ml-1 flex-1 text-[14px] font-bold text-[#d5e0fa]">分解位置</h2>
                    <button type="button" aria-label="关闭" class="flex size-5 items-center justify-center rounded-[3px] border border-[#e3dcee] bg-[#b9606f]">
                        <svg class="size-3" viewBox="0 0 12 12"><path d="M1 1l10 10M11 1L1 11" stroke="#fff" stroke-width="2"/></svg>
                    </button>
                </div>
                <div class="px-1 pt-[7px]">
                    <fieldset class="rounded-[4px] border border-[#d0d0bf] px-[7px] pt-1.5 pb-2">
                        <legend class="ml-1 px-1 leading-3 text-[#0046d5]"><label for="component">选取的元件</label></legend>
                        <div class="flex gap-1">
                            <button type="button" aria-label="选取元件" class="flex h-[19px] w-7 shrink-0 items-center justify-center rounded-[3px] border border-[#003c74] bg-[#e6e4d8]"><svg class="h-4 w-3"><use href="#pointer"/></svg></button>
                            <input id="component" type="text" value="MFG0036_WRK.PRT" class="h-[19px] w-full min-w-0 border border-[#7f9db9] bg-white px-0.5 text-[10px] leading-[17px]">
                        </div>
                    </fieldset>
                    <fieldset class="mt-[3px] rounded-[4px] border border-[#d0d0bf] px-[7px] pt-1 pb-[7px]">
                        <legend class="ml-1 px-1 leading-3 text-[#0046d5]">运动类型</legend>
                        <label class="flex h-[17px] items-center gap-1 pl-0.5"><input type="radio" name="motion" checked class="size-[13px] appearance-none rounded-full border border-[#1c5180] bg-[#f6f5f1] checked:bg-[radial-gradient(circle,#21a121_2px,#f6f5f1_3px)]">平移</label>
                        <label class="flex h-[17px] items-center gap-1 pl-0.5"><input type="radio" name="motion" class="size-[13px] appearance-none rounded-full border border-[#1c5180] bg-[#f6f5f1] checked:bg-[radial-gradient(circle,#21a121_2px,#f6f5f1_3px)]">复制位置</label>
                        <label class="flex h-[17px] items-center gap-1 pl-0.5"><input type="radio" name="motion" class="size-[13px] appearance-none rounded-full border border-[#1c5180] bg-[#f6f5f1] checked:bg-[radial-gradient(circle,#21a121_2px,#f6f5f1_3px)]">缺省分解</label>
                        <label class="flex h-[17px] items-center gap-1 pl-0.5"><input type="radio" name="motion" class="size-[13px] appearance-none rounded-full border border-[#1c5180] bg-[#f6f5f1] checked:bg-[radial-gradient(circle,#21a121_2px,#f6f5f1_3px)]">重置</label>
                    </fieldset>
                    <fieldset class="mt-[3px] rounded-[4px] border border-[#d0d0bf] px-[7px] pt-1 pb-[9px]">
                        <legend class="ml-1 px-1 leading-3 text-[#0046d5]"><label for="refType">运动参照</label></legend>
                        <div class="relative w-[131px]">
                            <select id="refType" class="block h-[19px] w-full appearance-none border border-[#7f9db9] bg-white pl-1 leading-4"><option>图元/边</option></select>
                            <span class="pointer-events-none absolute top-0.5 right-0.5 flex h-[15px] w-[19px] items-center justify-center rounded-[2px] bg-[#bccdfa]"><svg class="h-1.5 w-[9px]"><use href="#chevron"/></svg></span>
                        </div>
                        <div class="mt-1.5 flex gap-1">
                            <button type="button" aria-label="选取参照" class="flex h-[19px] w-7 shrink-0 items-center justify-center rounded-[3px] border border-[#003c74] bg-gradient-to-b from-white to-[#eceadf]"><svg class="h-4 w-3"><use href="#pointer"/></svg></button>
                            <input type="text" aria-label="参照" value="边:F9(分割)" class="h-[19px] w-full min-w-0 border border-[#7f9db9] bg-white px-0.5 text-[11px] leading-[15px]">
                        </div>
                    </fieldset>
                    <fieldset class="mt-2 rounded-[4px] border border-[#d0d0bf] px-[7px] pt-1 pb-2.5">
                        <legend class="ml-1 px-1 leading-3 text-[#0046d5]">运动增量</legend>
                        <div class="flex items-center gap-[3px]">
                            <label for="increment" class="shrink-0">平移</label>
                            <div class="relative flex-1">
                                <select id="increment" class="block h-[19px] w-full appearance-none border border-[#7f9db9] bg-white pl-0.5 text-[10px]"><option>5</option></select>
                                <span class="pointer-events-none absolute top-0.5 right-0.5 flex h-[15px] w-[19px] items-center justify-center rounded-[2px] bg-[#bccdfa]"><svg class="h-1.5 w-[9px]"><use href="#chevron"/></svg></span>
                            </div>
                        </div>
                    </fieldset>
                    <fieldset class="mt-1 rounded-[4px] border border-[#d0d0bf] px-[7px] pt-1 pb-1.5">
                        <legend class="ml-1 px-1 leading-3 text-[#0046d5]">位置</legend>
                        <div class="flex items-center gap-0.5">
                            <label for="relative" class="shrink-0">相对</label>
                            <input id="relative" type="text" readonly value="280.000" class="h-[19px] w-0 flex-1 border border-[#7f9db9] bg-[#ebe9e2] px-3 text-[10px]">
                            <input type="text" readonly aria-label="相对位置" class="h-[19px] w-0 flex-1 border border-[#7f9db9] bg-[#ebe9e2] px-3">
                        </div>
                    </fieldset>
                    <div class="mt-1 flex justify-between pr-0.5 pl-1">
                        <button type="button" class="h-[19px] w-[62px] rounded-[3px] border border-[#003c74] bg-gradient-to-b from-white to-[#eceadf]">撤消</button>
                        <button type="button" disabled class="h-[19px] w-[62px] rounded-[3px] border border-[#c9c7ba] bg-[#f5f4ea] text-[#a1a192]">重做</button>
                        <button type="button" class="h-[19px] w-[62px] rounded-[3px] border border-[#003c74] bg-gradient-to-b from-white to-[#eceadf]">优先选项</button>
                    </div>
                </div>
                <hr class="mt-1 border-t border-b border-t-[#aca899] border-b-white">
                <div class="mt-1.5 flex justify-center gap-12">
                    <button type="submit" class="h-[18px] w-[62px] rounded-[3px] border border-[#003c74] bg-gradient-to-b from-white to-[#eceadf] shadow-[inset_0_0_0_2px_#a5c1ee]">确定</button>
                    <button type="button" class="h-[18px] w-[62px] rounded-[3px] border border-[#003c74] bg-gradient-to-b from-white to-[#eceadf]">取消</button>
                </div>
            </form>

            <!-- Callout arrow and mouse pointer -->
            <svg class="pointer-events-none absolute inset-0 size-full" viewBox="237 105 572 477" preserveAspectRatio="xMinYMin slice" aria-hidden="true">
                <path d="M434 560L595 426" stroke="#000" stroke-width="2"/>
                <path d="M586 426l11-2-5 9" fill="none" stroke="#000" stroke-width="2"/>
                <path d="M684.500 317.500v17l4-4 3 7 3-1-3-7h5.500z" fill="#fff" stroke="#000"/>
            </svg>
        </section>

        <!-- Right tool strip -->
        <aside class="w-[27px] shrink-0 overflow-hidden whitespace-nowrap">
            <div class="flex flex-col items-end gap-2 pt-1">
                <span class="h-[3px] w-[25px] border-t-[3px] border-dotted border-[#aca899]"></span>
                <button aria-label="拉伸" class="mr-1"><svg class="size-5"><use href="#extrude"/></svg></button>
                <button aria-label="镜像" class="mr-0.5"><svg class="size-5"><use href="#mirror"/></svg></button>
                <button aria-label="拔模" class="mr-1"><svg class="size-5"><use href="#draft"/></svg></button>
                <button aria-label="曲面" class="mr-1"><svg class="size-5"><use href="#surface"/></svg></button>
                <span class="mt-0.5 h-[3px] w-[25px] border-t-[3px] border-dotted border-[#aca899]"></span>
                <span class="mt-0.5 h-[3px] w-[25px] border-t-[3px] border-dotted border-[#aca899]"></span>
            </div>
            <div class="mt-[5px] h-[27px] bg-gradient-to-b from-[#0a46c8] via-[#0050e8] to-[#0066ff]"></div>
            <div class="h-[23px] pl-[9px] leading-[23px]">选项</div>
            <div class="h-1 border-b border-[#888] bg-white"></div>
            <div class="h-[18px] bg-[#316ac5] text-[10px] leading-[18px] text-white">FT&gt;&lt;C&gt;</div>
            <div class="h-6 border-b border-[#aca899] bg-white"></div>
            <div class="h-[45px] border-b border-[#aca899] bg-white"></div>
            <div class="h-[69px] overflow-hidden bg-[#e8e8e8] pl-px text-teal-700">
                <p class="-mt-2.5 leading-[18px]">≯启动</p>
                <p class="leading-[19px]">抓图程</p>
                <p class="leading-[19px]">窗口并</p>
                <p class="leading-[19px]">像前进</p>
            </div>
        </aside>
    </main>

    <footer class="-mb-[3px] bg-[#ebe9e2] pt-[13px]">
        <p class="flex items-center"><svg class="h-3 w-[11px]"><use href="#goarrow"/></svg>选取要移动的元件。</p>
        <p class="flex items-center"><svg class="h-3 w-[11px]"><use href="#goarrow"/></svg>在模型窗口击左键开始拖移。</p>
        <p class="flex items-center"><svg class="h-3 w-[11px]"><use href="#goarrow"/></svg>选取一轴或直边作为运动参照。</p>
    </footer>

    <!-- Watermark panel -->
    <div class="pointer-events-none absolute right-[5px] bottom-[5px] h-[62px] w-[206px] bg-[#f2f2ee]/60"></div>

    <!-- Capture hint window -->
    <div class="absolute right-0 bottom-7 h-[27px] w-[188px] overflow-hidden border-b-[3px] border-l-[3px] border-[#3a62dc] bg-[#efede2] pt-1.5 whitespace-nowrap">
        <div class="border-t border-l border-[#8a887c] pl-[3px] leading-[18px] text-[#222]">按下捕捉热键<span class="text-[10px]">&lt;CTRL&gt;&lt;SHIFT&gt;&lt;C&gt;</span>进行</div>
    </div>

    <!-- Watermark -->
    <div class="pointer-events-none absolute right-[5px] bottom-[5px] h-[62px] w-[206px]">
        <svg class="absolute top-1 left-0.5 h-14 w-[58px]" viewBox="0 0 58 56" fill="none" aria-hidden="true">
            <path d="M34 14Q22-3 8 2Q-4 10 8 28Q18 40 30 40" stroke="#8fa0a8" stroke-width="3" opacity=".8"/>
            <path d="M24 28Q9 30 9 39Q14 50 26 42" stroke="#a8b4b8" stroke-width="3" opacity=".7"/>
            <path d="M38 18Q56 14 53 30Q46 52 32 53Q26 52 27 48" stroke="#e08080" stroke-width="4" opacity=".8"/>
        </svg>
        <div class="absolute top-0.5 left-[70px] font-['Noto_Sans_CJK_SC',sans-serif] text-[29px] leading-8 font-black text-[#3fae60]/50">野火论坛</div>
        <div class="absolute top-[39px] left-[59px] font-['DejaVu_Sans','Liberation_Sans',sans-serif] text-[14px] leading-5 text-[#b4d6ca]">www.proewildfire.cn</div>
    </div>
</body>
</html>
